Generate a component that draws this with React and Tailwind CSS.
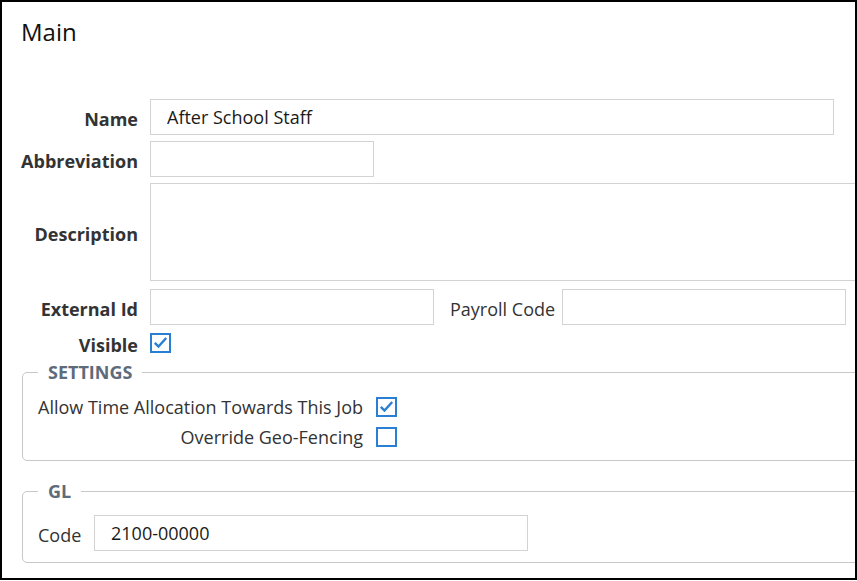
import React from 'react';

function Check({ checked }) {
  return (
    <span className="relative inline-block h-[20px] w-[21px] shrink-0 border-2 border-[#2b7fd2] bg-white">
      {checked && (
        <svg className="absolute inset-0 h-full w-full" viewBox="0 0 17 16" fill="none" aria-hidden="true">
          <polyline points="2.8,7.8 6.5,11.6 14.2,3" stroke="#2b7fd2" strokeWidth="2.4" />
        </svg>
      )}
    </span>
  );
}

function Row({ label, children, className = '' }) {
  return (
    <div className={`flex items-center ${className}`}>
      <label className="relative top-[2px] w-[136px] shrink-0 text-right font-bold leading-5 text-[#333]">{label}</label>
      <div className="ml-3 flex items-center">{children}</div>
    </div>
  );
}

const inputCls = 'h-[36px] border border-[#d3d3d3] bg-white px-4 text-[18px] text-[#1a1a1a] outline-none';

export default function App() {
  return (
    <div className="h-[580px] w-[857px] overflow-hidden border-2 border-black bg-white font-['Open_Sans',sans-serif] text-[18px] text-[#333]">
      <h1 className="pl-[19px] pt-[14px] text-2xl leading-8 text-[#111]">Main</h1>

      <div className="mt-[51px] flex flex-col">
        <Row label="Name">
          <input className={`${inputCls} w-[684px]`} defaultValue="After School Staff" />
        </Row>
        <Row label="Abbreviation" className="mt-[6px]">
          <input className={`${inputCls} w-[224px]`} />
        </Row>
        <Row label="Description" className="mt-[6px]">
          <textarea className="h-[98px] w-[740px] resize-none border border-[#d3d3d3] bg-white outline-none" />
        </Row>
        <Row label="External Id" className="mt-[8px]">
          <input className={`${inputCls} w-[284px]`} />
          <span className="relative top-[2px] ml-4 leading-5 text-[#333]">Payroll Code</span>
          <input className={`${inputCls} ml-[7px] w-[284px]`} />
        </Row>
        <Row label="Visible" className="mt-[8px]">
          <Check checked />
        </Row>
      </div>

      <fieldset className="ml-[20px] mt-[8px] w-[860px] rounded-[5px] border border-[#c8c8c8] pb-[8px] pl-[15px] pt-[9px]">
        <legend className="px-[10px] font-bold leading-[22px] text-[#5d6b7a]">SETTINGS</legend>
        <div className="flex h-[30px] items-center">
          <span className="w-[325px] text-right leading-5 text-[#333]">Allow Time Allocation Towards This Job</span>
          <span className="ml-[13px] flex"><Check checked /></span>
        </div>
        <div className="flex h-[30px] items-center">
          <span className="w-[325px] text-right leading-5 text-[#333]">Override Geo-Fencing</span>
          <span className="ml-[13px] flex"><Check /></span>
        </div>
      </fieldset>

      <fieldset className="ml-[20px] mt-[19px] w-[860px] rounded-[5px] border border-[#c8c8c8] pb-[11px] pl-[15px] pt-[13px]">
        <legend className="px-[10px] font-bold leading-[22px] text-[#5d6b7a]">GL</legend>
        <div className="flex items-center">
          <span className="relative top-[2px] w-[44px] leading-5 text-[#333]">Code</span>
          <input className={`${inputCls} ml-[12px] w-[434px]`} defaultValue="2100-00000" />
        </div>
      </fieldset>
    </div>
  );
}
